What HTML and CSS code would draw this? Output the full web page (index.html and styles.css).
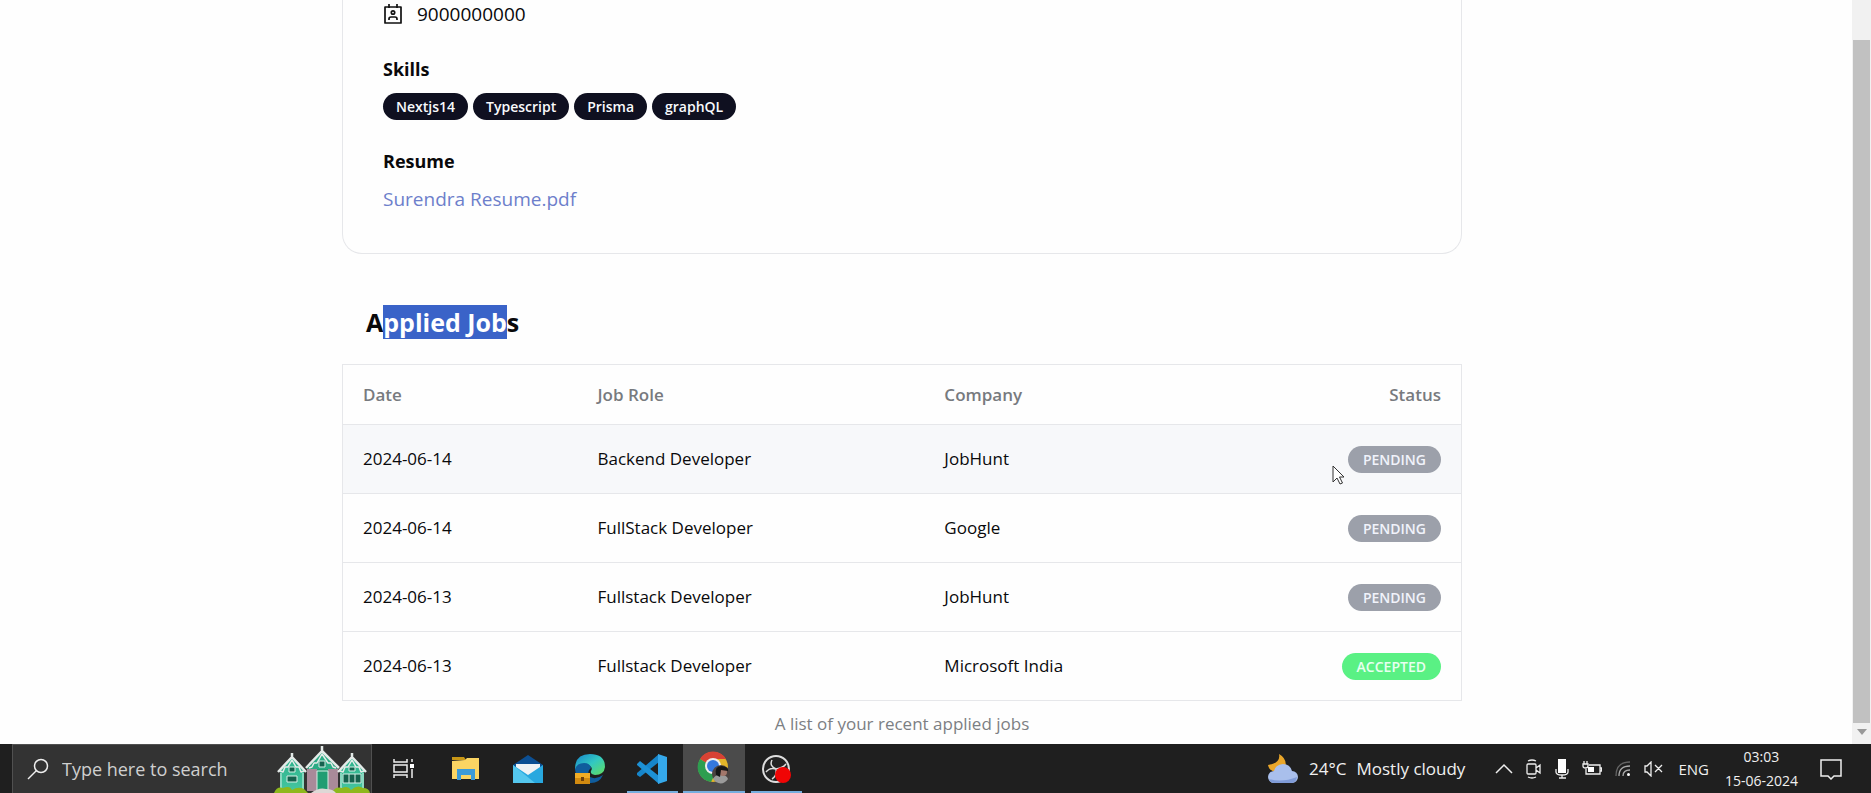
FILE: index.html
```html
<!DOCTYPE html>
<html lang="en">
<head>
<meta charset="utf-8">
<title>Applied Jobs</title>
<link rel="stylesheet" href="styles.css">
</head>
<body>
<div class="viewport">
  <main class="page">
    <section class="profile">
      <p class="contact">
        <svg class="contact-icon" viewBox="0 0 20 20" fill="none" stroke="#111" stroke-width="1.700" stroke-linejoin="round"><path d="M2 3h16v16H2zM6 0v4M14 0v4M6 16v-1q0-2 2-2h4q2 0 2 2v1"/><circle cx="10" cy="8.500" r="1.700"/></svg>
        <span>9000000000</span>
      </p>
      <h2 class="label">Skills</h2>
      <div class="skills">
        <span class="badge">Nextjs14</span>
        <span class="badge">Typescript</span>
        <span class="badge">Prisma</span>
        <span class="badge">graphQL</span>
      </div>
      <h2 class="label resume-label">Resume</h2>
      <a class="resume" href="#resume">Surendra Resume.pdf</a>
    </section>
    <h1 class="title">A<span class="selected">pplied Job</span>s</h1>
    <table class="jobs">
      <caption>A list of your recent applied jobs</caption>
      <colgroup><col class="col-date"><col class="col-role"><col class="col-company"><col></colgroup>
      <thead>
        <tr><th scope="col">Date</th><th scope="col">Job Role</th><th scope="col">Company</th><th scope="col" class="status">Status</th></tr>
      </thead>
      <tbody>
        <tr class="hovered"><td>2024-06-14</td><td>Backend Developer</td><td>JobHunt</td><td class="status"><span class="badge pending">PENDING<svg class="cursor" viewBox="0 0 13 20"><path d="M1 1v16l4-4 3 6 2.500-1-3-6H12z" fill="#fff" stroke="#333"/></svg></span></td></tr>
        <tr><td>2024-06-14</td><td>FullStack Developer</td><td>Google</td><td class="status"><span class="badge pending">PENDING</span></td></tr>
        <tr><td>2024-06-13</td><td>Fullstack Developer</td><td>JobHunt</td><td class="status"><span class="badge pending">PENDING</span></td></tr>
        <tr><td>2024-06-13</td><td>Fullstack Developer</td><td>Microsoft India</td><td class="status"><span class="badge accepted">ACCEPTED</span></td></tr>
      </tbody>
    </table>
  </main>
  <div class="scrollbar">
    <div class="thumb"></div>
    <svg class="scroll-arrow" viewBox="0 0 10 6"><path d="M0 0h10L5 6z" fill="#999"/></svg>
  </div>
</div>
<footer class="taskbar">
  <label class="search">
    <svg class="search-icon" viewBox="0 0 22 22" fill="none" stroke="#eee" stroke-width="1.500"><circle cx="14" cy="8" r="6.500"/><path d="M9.500 12.500L1 21"/></svg>
    <input type="text" placeholder="Type here to search" aria-label="Search">
    <svg class="houses" viewBox="0 0 98 48">
      <defs><linearGradient id="wall" x2="0" y2="1"><stop offset="0" stop-color="#2bb08a"/><stop offset="1" stop-color="#45c6a0"/></linearGradient></defs>
      <path d="M7 26L19 12l12 14v20H7z" fill="url(#wall)"/>
      <path d="M67 26L79 12l12 14v20H67z" fill="url(#wall)"/>
      <path d="M34 24L49 6l16 18z" fill="#2bab84"/>
      <path d="M34 24h31v22H34z" fill="#a98a99"/>
      <path d="M44 24h11v22H44z" fill="#209d72"/>
      <g fill="none" stroke="#e4eae8" stroke-width="2.500" stroke-linejoin="round">
        <path d="M5 27l14-15 14 15M19 8v5M33 23L49 6l17 17M49 1v6M65 27l14-15 14 15M79 8v5"/>
        <path d="M7 26l3 1 2-5 3 0 4-7 4 7 3 0 2 5 3-1M36 23l3-1 2-4 3 0 5-9 6 9 3 0 2 4 3 1M67 26l3 1 2-5 3 0 4-7 4 7 3 0 2 5 3-1" stroke-width="1.500"/>
      </g>
      <g fill="#15624e" stroke="#d5f0e6">
        <path d="M16 22h6v5h-6zM14 31h10v6H14zM46 16h6v6h-6zM76 22h6v4h-6zM70 29h18v9H70zM76 29v9M82 29v9"/>
        <path d="M44 46V26h11v20" fill="none"/>
      </g>
      <path d="M8 28v18M30 28v18M68 28v18M90 28v18" stroke="#d5f0e6"/>
      <path d="M1 48q3-7 9-5 7-3 9 2 6-4 12-1l4 4z" fill="#8eb81d"/>
      <path d="M59 48q3-7 10-5 6-3 9 2 6-6 12-2 6 0 7 5z" fill="#8eb81d"/>
      <path d="M38 48q8-6 15-4 7 0 10 4z" fill="#ded8d6"/>
    </svg>
  </label>
  <nav class="apps">
    <button class="app" aria-label="Task view"><svg width="22" height="22" viewBox="0 0 22 22" fill="none" stroke="#eee" stroke-width="1.500"><path d="M1 1v3h13V1M1 20v-3h13v3M1 7h13v7H1zM19 1v3M19 11v9"/><path d="M17 6h4v4h-4z" fill="#fff" stroke="none"/></svg></button>
    <button class="app" aria-label="File Explorer"><svg width="30" height="30" viewBox="0 0 30 30"><path d="M1 3h12l2 3H1z" fill="#c89716"/><path d="M1 7l13-1 2-2h12v21H1z" fill="#fbd563"/><path d="M6 26V15h18v11h-4v-5H10v5z" fill="#3c9bd7"/></svg></button>
    <button class="app" aria-label="Mail"><svg width="32" height="30" viewBox="0 0 32 30"><path d="M1 11L16 1l15 10v5H1z" fill="#0c4f93"/><path d="M4 10h24v12H4z" fill="#f0f3f5"/><path d="M1 11l15 10 15-10v18H1z" fill="#28a8df"/><path d="M1 29V11l22 18z" fill="#54c7ee"/></svg></button>
    <button class="app" aria-label="Edge"><svg width="32" height="32" viewBox="0 0 32 32"><defs><linearGradient id="edge" y2="1"><stop stop-color="#1684cc"/><stop offset=".5" stop-color="#32c8c2"/><stop offset="1" stop-color="#63df5b"/></linearGradient></defs><path d="M1 16Q1 1 16 1t15 13q-1 8-10 8-5-1-4-4 2-3-1-5-6-3-11 4z" fill="url(#edge)"/><path d="M1 16q2-6 9-6 6 0 7 5-5 4-1 9 6 3 13-2-4 9-14 8Q2 28 1 16z" fill="#105d9d"/><path d="M1 20h15v11H1z" fill="#d18a10"/><path d="M1 20h15v5H1z" fill="#f0ac25"/><path d="M7 24h3v4H7z" fill="#70420b"/></svg></button>
    <button class="app running" aria-label="Visual Studio Code"><svg width="32" height="32" viewBox="0 0 32 32"><path d="M23 1v8L4 24l-3-2v-2z" fill="#1685ca"/><path d="M1 11l3-3 19 15v8L1 12z" fill="#1d91d5"/><path d="M22 1l9 3v24l-9 3z" fill="#35a8ea"/></svg></button>
    <button class="app active" aria-label="Chrome"><svg width="34" height="34" viewBox="0 0 34 34"><circle cx="16" cy="16" r="15" fill="#e3b529"/><path d="M16 16L3 8A15 15 0 0 1 29 8H16z" fill="#d84234"/><path d="M16 16L3 8a15 15 0 0 0 11 23l5-10z" fill="#2d9e50"/><circle cx="16" cy="15" r="8" fill="#eee"/><circle cx="16" cy="15" r="6" fill="#3478dd"/><circle cx="24" cy="23" r="9" fill="#4b4341"/><path d="M16 28q3-5 8-4 6 0 7 4-5 7-12 3z" fill="#9b9b9b"/><circle cx="26" cy="21" r="4" fill="#a3776b"/><path d="M19 24q-2-9 6-9 7 1 6 5l-7-1-1 7z" fill="#171717"/></svg></button>
    <button class="app running" aria-label="OBS Studio"><svg width="30" height="30" viewBox="0 0 30 30"><circle cx="15" cy="15" r="13" fill="#222" stroke="#ddd" stroke-width="2"/><path d="M11 6q-3 6 4 9 7-1 10-5M15 15q1 7-4 10M15 15q-6-2-10 3" fill="none" stroke="#ddd" stroke-width="1.500"/><circle cx="22" cy="21" r="8" fill="#f00505"/></svg></button>
  </nav>
  <div class="tray">
    <button class="weather">
      <svg width="32" height="32" viewBox="0 0 32 32"><path d="M12 1q2 9-11 11 1 6 8 7l9-3q3-10-6-15z" fill="#e9a62a"/><path d="M7 30a6 6 0 0 1 0-12q1-6 9-7 7 0 9 7a6 6 0 0 1 0 12z" fill="#a9bfec"/><path d="M2 26q13 4 28-2-1 6-6 6H7q-4 0-5-4z" fill="#809cd8"/></svg>
      <span>24°C</span><span>Mostly cloudy</span>
    </button>
    <div class="indicators">
      <svg width="18" height="12" viewBox="0 0 18 12" fill="none" stroke="#eee" stroke-width="1.500"><path d="M1 10l8-8 8 8"/></svg>
      <svg width="16" height="20" viewBox="0 0 16 20" fill="none" stroke="#eee" stroke-width="1.300"><path d="M1 6q0-1 1-1h7q1 0 1 1v8q0 1-1 1H2q-1 0-1-1zM10 9l4-3v8l-4-3M2 2q4-2 8 0M2 18q4 2 8 0"/></svg>
      <svg width="14" height="20" viewBox="0 0 14 20" fill="none" stroke="#eee" stroke-width="1.300"><path d="M3 0h8v14H3z" fill="#fff" stroke="none"/><path d="M1 10v3q0 3 6 3t6-3v-3M7 16v3M4 19h7"/></svg>
      <svg width="20" height="16" viewBox="0 0 20 16" fill="none" stroke="#eee" stroke-width="1.300"><path d="M7 4h11v9H4V8M18 7h1.500v3H18M1 3h5v2q0 2-2.500 2T1 5zM2 0v3M5 0v3"/><path d="M6 6h6v5H6z" fill="#fff" stroke="none"/></svg>
      <svg width="16" height="16" viewBox="0 0 16 16" fill="none" stroke="#aaa" stroke-width="1.300"><path d="M1 15Q1 1 15 1" stroke="#666"/><path d="M4 15Q4 5 15 5M8 15q0-6 7-6"/><circle cx="13.500" cy="13.500" r="1.500" fill="#fff" stroke="none"/></svg>
      <svg width="20" height="16" viewBox="0 0 20 16" fill="none" stroke="#eee" stroke-width="1.300"><path d="M1 5h2l4-4v14l-4-4H1zM11 4l7 7M18 4l-7 7"/></svg>
    </div>
    <span class="language">ENG</span>
    <time class="clock" datetime="2024-06-15T03:03"><span>03:03</span><span>15-06-2024</span></time>
    <button class="notifications" aria-label="Notifications"><svg width="22" height="22" viewBox="0 0 22 22" fill="none" stroke="#eee" stroke-width="1.500"><path d="M1 2h20v16h-7l-3 3-3-3H1z"/></svg></button>
  </div>
</footer>
</body>
</html>
```
FILE: styles.css
```css
* { box-sizing: border-box; }
body {
  margin: 0;
  height: 100vh;
  display: flex;
  flex-direction: column;
  font-family: "Open Sans", "Noto Sans", sans-serif;
  font-size: 17px;
  line-height: 24px;
  color: #09090b;
  background: #fefefe;
}
h1, h2, p { margin: 0; }
button { border: 0; padding: 0; background: none; color: inherit; font: inherit; }
svg { display: block; flex: none; }

.viewport { flex: 1; min-height: 0; display: flex; overflow: hidden; }
.page { flex: 1; min-width: 0; padding: 0 390px 0 342px; }

.profile {
  border: 1px solid #e6e7ea;
  border-top: 0;
  border-radius: 0 0 20px 20px;
  padding: 2px 40px 42px;
}
.contact { display: flex; align-items: center; gap: 14px; font-size: 19px; }
.contact-icon { width: 20px; height: 20px; }
.label { margin-top: 31px; font-size: 18px; line-height: 24px; font-weight: 700; }
.skills { display: flex; gap: 5px; margin-top: 12px; }
.badge {
  display: inline-block;
  padding: 0 14px;
  border-radius: 14px;
  background: #0f1020;
  color: #f8fafc;
  font-size: 14px;
  line-height: 27px;
  font-weight: 600;
}
.skills .badge { padding: 0 13px; }
.resume-label { margin-top: 29px; }
.resume { display: block; margin-top: 14px; font-size: 19px; color: #6d7fcb; text-decoration: none; }

.title { margin: 50px 24px 24px; font-size: 25px; line-height: 36px; font-weight: 700; }
.selected { background: #3a63c8; color: #fff; }

.jobs { width: 100%; table-layout: fixed; border-collapse: collapse; border: 1px solid #e6e7ea; }
.jobs caption { caption-side: bottom; padding-top: 11px; color: #7c7f83; }
.col-date { width: 21%; }
.col-role { width: 31%; }
.col-company { width: 28%; }
.jobs th { height: 60px; padding: 0 20px; text-align: left; font-weight: 600; color: #777a7e; }
.jobs td { height: 69px; padding: 0 20px; }
.jobs tr { border-bottom: 1px solid #e6e7ea; }
.jobs .status { text-align: right; }
.hovered { background: #f7f8fa; }
.jobs .badge { padding: 0 15px; }
.pending { position: relative; background: #9ca0aa; color: #f1f3fb; }
.accepted { background: #5af184; color: #e8fff0; }
.cursor { position: absolute; left: -16px; top: 19px; width: 13px; height: 20px; }

.scrollbar {
  width: 19px;
  display: flex;
  flex-direction: column;
  align-items: center;
  padding: 40px 1px 9px;
  background: #f1f1f1;
}
.thumb { flex: 1; width: 100%; background: #c1c1c1; }
.scroll-arrow { width: 10px; height: 6px; margin-top: 6px; }

.taskbar { height: 49px; display: flex; background: #1f1f1f; color: #f0f0f0; padding-left: 12px; }
.search {
  width: 360px;
  display: flex;
  align-items: center;
  padding-left: 14px;
  border: 1px solid #505050;
  border-bottom: 0;
  background: #333;
}
.search-icon { width: 22px; height: 22px; }
.search input {
  flex: 1;
  min-width: 0;
  margin-left: 13px;
  padding: 0;
  border: 0;
  outline: 0;
  background: none;
  color: #ddd;
  font: inherit;
  font-size: 18px;
}
.search input::placeholder { color: #cfcfcf; opacity: 1; }
.houses { width: 98px; height: 48px; }
.apps { display: flex; padding-left: 1px; }
.app { width: 62px; display: flex; align-items: center; justify-content: center; }
.running { background: linear-gradient(#76aede, #76aede) center bottom / 51px 2px no-repeat; }
.active { background: #4b4b4b; border-bottom: 2px solid #76aede; }

.tray { margin-left: auto; display: flex; align-items: center; padding-right: 29px; }
.weather { display: flex; align-items: center; gap: 10px; font-size: 17px; }
.indicators { display: flex; align-items: center; gap: 13px; margin-left: 30px; }
.language { margin-left: 14px; font-size: 15px; }
.clock { margin-left: 16px; display: flex; flex-direction: column; text-align: center; font-size: 14px; }
.notifications { margin-left: 22px; }
```
